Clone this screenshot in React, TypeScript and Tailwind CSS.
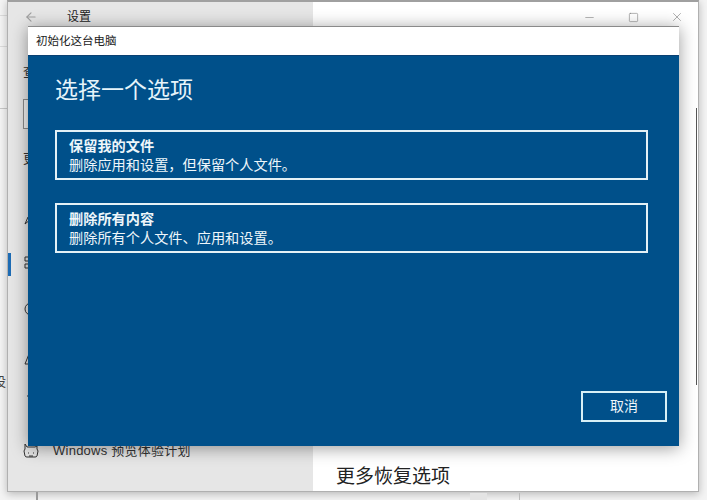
import { ArrowLeft, Minus, Square, X } from 'lucide-react';

const cjk = "font-['Liberation_Sans','Noto_Sans_CJK_SC',sans-serif]";

function OptionCard({ title, desc }: { title: string; desc: string }) {
    return (
        <div className="h-[50px] border-2 border-[#e4f1f6] px-3 pt-[5px] text-[14.2px] leading-[18.5px] text-[#eef6fa]">
            <p className="font-bold">{title}</p>
            <p>{desc}</p>
        </div>
    );
}

function SideIcon({ d, className }: { d: string; className: string }) {
    return (
        <svg viewBox="0 0 16 16" className={`w-4 h-4 shrink-0 fill-none stroke-[#333] stroke-1 ${className}`}>
            <path d={d} />
        </svg>
    );
}

export default function App() {
    return (
        <div className={`relative w-[707px] h-[500px] overflow-hidden bg-[#f4f4f4] ${cjk}`}>
            {/* faint lines of the page behind the window */}
            <div className="absolute left-0 top-[15px] w-[7px] h-px bg-[#dcdcdc]" />
            <div className="absolute left-0 top-[46px] w-[7px] h-px bg-[#dcdcdc]" />
            <div className="absolute left-0 top-[108px] w-[7px] h-px bg-[#c8c8c8]" />
            <div className="absolute left-[-7px] top-[373px] text-[13px] leading-[18px] text-[#444]">设</div>

            {/* settings window behind the dialog */}
            <div className="absolute left-[7px] top-0 w-[692px] h-[492px] flex border border-[#b0b0b0] border-t-2 border-t-[#a0a0a0] bg-white shadow-[0_2px_8px_rgba(0,0,0,0.25)]">
                <div className="w-[305px] flex flex-col bg-[#e6e6e6]">
                    <div className="h-[30px] flex items-center pl-[16px] text-[12px] text-[#222]">
                        <ArrowLeft className="w-[14px] h-[14px] text-[#a0a0a0]" />
                        <span className="ml-[29px]">设置</span>
                    </div>
                    <div className="flex-1 flex flex-col pl-[15px] pt-[30px] text-[#333]">
                        <span className="text-[13px] leading-[20px]">查</span>
                        <div className="w-[20px] h-[30px] mt-[17px] border border-[#8c8c8c] bg-[#f2f2f2]" />
                        <span className="mt-[20px] text-[13px] leading-[20px]">更</span>
                        <SideIcon className="mt-[42px]" d="M2 13l3-7 5-4-2 6z" />
                        <SideIcon className="mt-[27px]" d="M2 3h6v4H2zM2 10h6v4H2z" />
                        <SideIcon className="mt-[31px]" d="M14 8a6 6 0 1 0-12 0 6 6 0 0 0 12 0M8 5v3" />
                        <SideIcon className="mt-[34px]" d="M2 13h9M2 13l4-10h5" />
                        <SideIcon className="mt-[26px]" d="M6 2v12M4 3h4" />
                        <div className="mt-[32px] flex items-center gap-[14px] text-[13px]">
                            <SideIcon className="" d="M2 1l2 3h8l2-1v3l1 2-1 5a2 2 0 0 1-2 1H4a2 2 0 0 1-2-1l-1-5 1-2zM5 10h1M10 10h1M6 13h4" />
                            <span className="tracking-[0.25px] text-[#333]">Windows 预览体验计划</span>
                        </div>
                    </div>
                </div>
                <div className="flex-1 flex flex-col bg-white">
                    <div className="h-[30px] flex items-center justify-end pr-[14px] text-[#777]">
                        <Minus className="w-[13px] h-[13px]" strokeWidth={1} />
                        <Square className="w-[11px] h-[11px] ml-[32px]" strokeWidth={1.2} />
                        <X className="w-[14px] h-[14px] ml-[31px]" strokeWidth={1} />
                    </div>
                    <div className="flex-1 flex flex-col justify-end pb-[1px] pl-[23px]">
                        <span className="text-[19px] leading-[26px] text-[#222]">更多恢复选项</span>
                    </div>
                </div>
            </div>

            {/* selected nav marker */}
            <div className="absolute left-[8px] top-[253px] w-[3px] h-[23px] bg-[#1e6cb4]" />
            {/* scroll thumb */}
            <div className="absolute left-[696px] top-[108px] w-[1px] h-[277px] bg-[#555]" />
            {/* bits of the window behind, under the screenshot edge */}
            <div className="absolute left-[36px] top-[492px] w-[2px] h-[8px] bg-[#999]" />
            <div className="absolute left-[470px] top-[493px] w-[17px] h-[7px] bg-[#e4e4e4]" />
            <div className="absolute left-[519px] top-[493px] w-[1px] h-[7px] bg-[#bbb]" />

            {/* reset dialog */}
            <div className="absolute left-[28px] top-[26px] w-[651px] h-[420px] flex flex-col shadow-[0_2px_16px_rgba(0,0,0,0.4)]">
                <div className="h-[29px] flex items-center pl-2 pt-px bg-white border-t border-[#8a8a8a] text-[11.5px] text-[#222]">
                    初始化这台电脑
                </div>
                <div className="flex-1 flex flex-col bg-[#00508a] border-t border-[#0a4072] pl-[27px] pr-[31px]">
                    <h1 className="mt-[18px] text-[23px] leading-[32px] font-normal text-[#e6f4fa]">选择一个选项</h1>
                    <div className="mt-[24px] flex flex-col gap-[23px] w-[593px]">
                        <OptionCard title="保留我的文件" desc="删除应用和设置，但保留个人文件。" />
                        <OptionCard title="删除所有内容" desc="删除所有个人文件、应用和设置。" />
                    </div>
                    <div className="mt-auto mb-[24px] flex justify-end -mr-[19px]">
                        <button className="w-[86px] h-[31px] border-2 border-[#d8f0f6] text-[14px] text-[#eef6fa]">取消</button>
                    </div>
                </div>
            </div>
        </div>
    );
}
